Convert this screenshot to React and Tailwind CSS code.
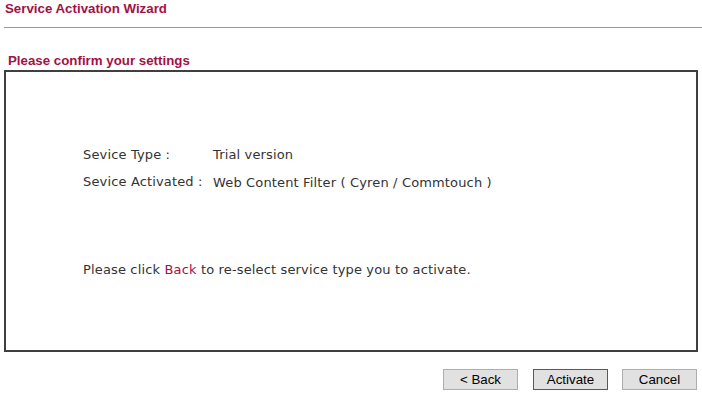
export default function App() {
  return (
    <div className="w-[702px] h-[393px] bg-white overflow-hidden" style={{ fontFamily: 'Verdana, "DejaVu Sans", sans-serif' }}>
      <div className="pl-[5px] pt-[1px] h-[27px] text-[13.3px] font-bold text-[#a21146] leading-[16px] font-['Liberation_Sans',Arial,sans-serif]">
        Service Activation Wizard
      </div>
      <div className="ml-[4px] h-px bg-[#9a9a9a]" />

      <div className="pl-[8px] pt-[25px] h-[42px] text-[13.3px] font-bold text-[#a21146] leading-[16px] font-['Liberation_Sans',Arial,sans-serif]">
        Please confirm your settings
      </div>

      <div className="ml-[4px] w-[694px] h-[282px] border-2 border-[#3f3f3f] text-[13px] tracking-[0.15px] text-[#333333]">
        <div className="pl-[77px] pt-[73px]">
          <div className="flex h-[27px] items-start">
            <span className="w-[130px]">Sevice Type :</span>
            <span>Trial version</span>
          </div>
          <div className="flex items-start">
            <span className="w-[130px]">Sevice Activated :</span>
            <span className="pt-[1px]">Web Content Filter ( Cyren / Commtouch )</span>
          </div>
          <div className="pt-[67px]">
            Please click <span className="text-[#a21146]">Back</span> to re-select service type you to activate.
          </div>
        </div>
      </div>

      <div className="flex justify-end pr-[5px] pt-[17px] font-['Liberation_Sans',Arial,sans-serif] text-[13.3px] text-black">
        <button className="w-[75px] h-[21px] border border-[#adadad] bg-[#e1e1e1] leading-[19px]">&lt; Back</button>
        <button className="ml-[15px] w-[75px] h-[21px] border border-[#e01e24] bg-[#e1e1e1] leading-[19px]">Activate</button>
        <button className="ml-[14px] w-[75px] h-[21px] border border-[#adadad] bg-[#e1e1e1] leading-[19px]">Cancel</button>
      </div>
    </div>
  )
}
